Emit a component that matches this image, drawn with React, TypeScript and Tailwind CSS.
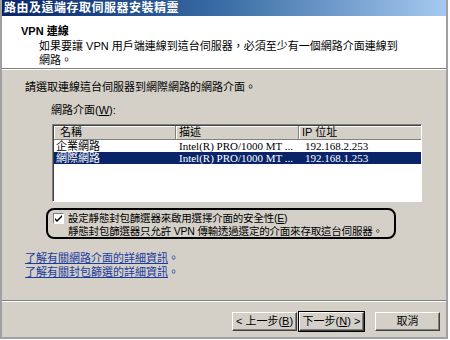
import React from 'react';

const sans = { fontFamily: '"Liberation Sans", "Noto Sans CJK TC", sans-serif' };
const serif = { fontFamily: '"Liberation Serif", "Noto Sans CJK TC", serif' };

function Btn({ children, isDefault = false }: { children: React.ReactNode; isDefault?: boolean }) {
  return (
    <div className={isDefault ? 'border border-black' : 'border border-transparent'}>
      <div className="h-[19px] w-[65px] flex items-center justify-center bg-[#d4d0c8] border-t border-l border-white border-b border-r border-b-[#404040] border-r-[#404040] text-[11px] leading-none text-black shadow-[inset_-1px_-1px_0_#808080]">
        {children}
      </div>
    </div>
  );
}

export default function App() {
  const rows = [
    { name: '企業網路', desc: 'Intel(R) PRO/1000 MT ...', ip: '192.168.2.253', sel: false },
    { name: '網際網路', desc: 'Intel(R) PRO/1000 MT ...', ip: '192.168.1.253', sel: true },
  ];

  return (
    <div className="w-[450px] h-[340px] bg-white p-0" style={sans}>
      <div className="w-[448px] h-[339px] flex flex-col bg-[#d4d0c8] border-x-2 border-b-2 border-x-[#a0a0a0] border-b-[#a0a0a0]">
        {/* title bar */}
        <div className="h-[16px] flex items-center px-[2px] bg-gradient-to-r from-[#0a246a] via-[#3a6ea5] to-[#a6caf0]">
          <span className="text-white font-bold text-[12px] leading-none tracking-[0.5px]">路由及遠端存取伺服器安裝精靈</span>
        </div>

        {/* header */}
        <div className="h-[52px] bg-white pl-[19px] pt-[8px] text-black">
          <div className="text-[11px] font-bold leading-[14px]">VPN 連線</div>
          <div className="pl-[18px] text-[11px] leading-[14px] mt-[1px]">
            如果要讓 VPN 用戶端連線到這台伺服器，必須至少有一個網路介面連線到
            <br />
            網路。
          </div>
        </div>
        <div className="h-[2px] border-t border-[#808080] border-b border-b-white" />

        {/* body */}
        <div className="flex-1 flex flex-col px-[23px] text-[11px] text-black">
          <div className="mt-[10px] leading-[14px]">請選取連線這台伺服器到網際網路的網路介面。</div>
          <div className="mt-[9px] ml-[26px] leading-[14px]">
            網路介面(<span className="underline">W</span>):
          </div>

          <div className="mt-[7px] ml-[27px] w-[370px] h-[78px] bg-white border-t border-l border-[#808080] border-b border-r border-b-white border-r-white shadow-[inset_1px_1px_0_#404040]">
            <div className="flex h-[14px] ml-[1px] mt-[1px]">
              <div className="w-[122px] bg-[#d4d0c8] border-r border-b border-[#808080] pl-[6px] leading-[13px] shadow-[inset_1px_1px_0_#ffffff]">名稱</div>
              <div className="w-[123px] bg-[#d4d0c8] border-r border-b border-[#808080] pl-[3px] leading-[13px] shadow-[inset_1px_1px_0_#ffffff]">描述</div>
              <div className="flex-1 bg-[#d4d0c8] border-b border-[#808080] pl-[3px] leading-[13px] shadow-[inset_1px_1px_0_#ffffff]">IP 位址</div>
            </div>
            {rows.map((r) => (
              <div key={r.name} className={`flex h-[12px] ml-[1px] leading-[12px] ${r.sel ? 'bg-[#0a246a] text-white' : ''}`}>
                <div className="w-[123px] pl-[2px]">{r.name}</div>
                <div className="w-[123px] pl-[2px]" style={serif}>{r.desc}</div>
                <div className="flex-1 pl-[5px]" style={serif}>{r.ip}</div>
              </div>
            ))}
          </div>

          {/* highlighted checkbox group */}
          <div className="mt-[6px] ml-[21px] w-[350px] h-[31px] border-2 border-black rounded-[8px] flex items-start pt-[2px] pl-[5px]">
            <div className="w-[11px] h-[11px] mt-[1px] bg-white border-t border-l border-[#808080] border-b border-r border-b-white border-r-white flex items-center justify-center shrink-0">
              <svg width="7" height="7" viewBox="0 0 7 7">
                <path d="M0 3 L2 5 L7 0 L7 2 L2 7 L0 5 Z" fill="#000" />
              </svg>
            </div>
            <div className="ml-[4px] leading-[13px] text-[10.5px] whitespace-nowrap tracking-[-0.2px]">
              設定靜態封包篩選器來啟用選擇介面的安全性(<span className="underline">E</span>)
              <br />
              靜態封包篩選器只允許 VPN 傳輸透過選定的介面來存取這台伺服器。
            </div>
          </div>

          <div className="mt-[12px] flex flex-col leading-[14px] text-[#1a3aa0]">
            <span><span className="underline">了解有關網路介面的詳細資訊</span>。</span>
            <span><span className="underline">了解有關封包篩選的詳細資訊</span>。</span>
          </div>
        </div>

        {/* footer */}
        <div className="h-[2px] border-t border-[#808080] border-b border-b-white" />
        <div className="h-[35px] flex items-start justify-end pt-[9px] pr-[5px]">
          <Btn>&lt; 上一步(<span className="underline">B</span>)</Btn>
          <Btn isDefault>下一步(<span className="underline">N</span>) &gt;</Btn>
          <div className="w-[9px]" />
          <Btn>取消</Btn>
        </div>
      </div>
    </div>
  );
}
